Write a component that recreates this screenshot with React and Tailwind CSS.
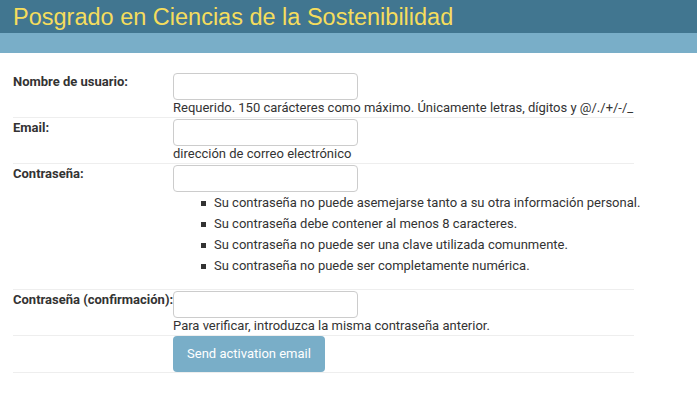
const ROBOTO = { fontFamily: 'Roboto, "Liberation Sans", sans-serif' }

function Row({ label, children }) {
  return (
    <div className="flex border-b border-[#eeeeee] pt-[1px] pb-[1px]">
      <label className="w-[160px] shrink-0 whitespace-nowrap pt-[1px] text-[13px] leading-[16px] font-bold text-[#333333]">{label}</label>
      <div className="flex flex-col">{children}</div>
    </div>
  )
}

function Campo({ type = 'text' }) {
  return (
    <input type={type}
      className="h-[27px] w-[185px] rounded-[4px] border border-[#cccccc] bg-white px-[5px] outline-none" />
  )
}

function Ayuda({ children }) {
  return <p className="whitespace-nowrap text-[13px] leading-[16px] text-[#333333]">{children}</p>
}

const REGLAS = [
  'Su contraseña no puede asemejarse tanto a su otra información personal.',
  'Su contraseña debe contener al menos 8 caracteres.',
  'Su contraseña no puede ser una clave utilizada comunmente.',
  'Su contraseña no puede ser completamente numérica.',
]

export default function App() {
  return (
    <div className="min-h-[402px] bg-white" style={ROBOTO}>
      <header>
        <div className="h-[33px] bg-[#417690] pl-[13px]">
          <h1 className="text-[23.5px] leading-[34px] text-[#f5dd5d]"
            style={{ fontFamily: '"Liberation Sans", Arial, sans-serif' }}>
            Posgrado en Ciencias de la Sostenibilidad
          </h1>
        </div>
        <div className="h-[20px] bg-[#79aec8]" />
      </header>

      <form className="ml-[13px] mt-[19px] w-[621px]">
        <Row label="Nombre de usuario:">
          <Campo />
          <Ayuda>Requerido. 150 carácteres como máximo. Únicamente letras, dígitos y @/./+/-/_</Ayuda>
        </Row>
        <Row label="Email:">
          <Campo type="email" />
          <Ayuda>dirección de correo electrónico</Ayuda>
        </Row>
        <Row label="Contraseña:">
          <Campo type="password" />
          <ul className="mt-[3px] mb-[14px] flex flex-col gap-[5px] pl-[28px] text-[13px] leading-[16px] text-[#333333]">
            {REGLAS.map((r) => (
              <li key={r} className="flex items-center gap-[8px] whitespace-nowrap">
                <span className="h-[5px] w-[5px] shrink-0 bg-[#333333]" />
                {r}
              </li>
            ))}
          </ul>
        </Row>
        <Row label="Contraseña (confirmación):">
          <Campo type="password" />
          <Ayuda>Para verificar, introduzca la misma contraseña anterior.</Ayuda>
        </Row>
        <div className="flex border-b border-[#eeeeee]">
          <div className="w-[160px] shrink-0" />
          <button type="button"
            className="h-[36px] w-[152px] rounded-[4px] bg-[#79aec8] text-[13px] text-white">
            Send activation email
          </button>
        </div>
      </form>
    </div>
  )
}
